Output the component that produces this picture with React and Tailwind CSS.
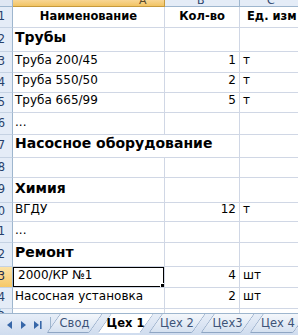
import React from 'react';

const rows = [
  { n: 1, h: 'h-[21px]', kind: 'header' },
  { n: 2, h: 'h-[24px]', a: 'Трубы', bold: true },
  { n: 3, h: 'h-[21px]', a: 'Труба 200/45', b: '1', c: 'т' },
  { n: 4, h: 'h-[20px]', a: 'Труба 550/50', b: '2', c: 'т' },
  { n: 5, h: 'h-[20px]', a: 'Труба 665/99', b: '5', c: 'т' },
  { n: 6, h: 'h-[22px]', a: '...' },
  { n: 7, h: 'h-[23px]', a: 'Насосное оборудование', bold: true, overflow: true },
  { n: 8, h: 'h-[20px]' },
  { n: 9, h: 'h-[25px]', a: 'Химия', bold: true },
  { n: 10, h: 'h-[19px]', a: 'ВГДУ', b: '12', c: 'т' },
  { n: 11, h: 'h-[21px]', a: '...' },
  { n: 12, h: 'h-[24px]', a: 'Ремонт', bold: true },
  { n: 13, h: 'h-[21px]', a: '2000/КР №1', b: '4', c: 'шт', sel: true },
  { n: 14, h: 'h-[21px]', a: 'Насосная установка', b: '2', c: 'шт' },
  { n: 15, h: 'h-[10px]' },
];

function RowHead({ n, sel }) {
  return (
    <div
      className={`w-[13px] shrink-0 overflow-hidden flex justify-end items-center pr-[7px] border-r border-b border-r-[#9eb6ce] border-b-[#c5d2e3] text-[11.5px] leading-none ${
        sel ? 'bg-gradient-to-b from-[#fbe3a8] to-[#f6c866] text-[#1c2b4a]' : 'bg-[#e4ecf7] text-[#27416b]'
      }`}
    >
      <span className="whitespace-nowrap">{n}</span>
    </div>
  );
}

function Row({ r }) {
  if (r.kind === 'header') {
    return (
      <div className={`flex ${r.h}`}>
        <RowHead n={r.n} />
        <div className="w-[152px] shrink-0 border-r border-b border-[#d0d7e5] flex items-center justify-center font-bold text-[11.5px] text-black">
          Наименование
        </div>
        <div className="w-[75px] shrink-0 border-r border-b border-[#d0d7e5] flex items-center justify-center font-bold text-[11.5px] text-black">
          Кол-во
        </div>
        <div className="w-[58px] shrink-0 border-b border-[#d0d7e5] flex items-center pl-[7px] font-bold text-[11.5px] text-black whitespace-nowrap">
          Ед. изм
        </div>
      </div>
    );
  }
  return (
    <div className={`flex ${r.h}`}>
      <RowHead n={r.n} sel={r.sel} />
      <div
        className={`relative w-[152px] shrink-0 border-b border-[#d0d7e5] flex items-end pb-[3px] whitespace-nowrap ${
          r.overflow ? 'z-10' : 'border-r overflow-hidden'
        } ${r.bold ? 'text-[14px] font-bold pl-[2px] pb-[2px]' : 'text-[12px] pl-[2px]'} ${r.sel ? 'pl-[5px]' : ''}`}
      >
        {r.a}
        {r.sel && (
          <>
            <div className="absolute -left-px -top-px -right-px -bottom-px border-2 border-black pointer-events-none" />
            <div className="absolute -right-[3px] -bottom-[3px] w-[5px] h-[5px] bg-black border border-white box-content" />
          </>
        )}
      </div>
      <div className="w-[75px] shrink-0 border-r border-b border-[#d0d7e5] flex items-end justify-end pr-[3px] pb-[3px] text-[12px]">
        {r.b}
      </div>
      <div className="w-[58px] shrink-0 border-b border-[#d0d7e5] flex items-end pl-[3px] pb-[3px] text-[12px]">
        {r.c}
      </div>
    </div>
  );
}

function Tab({ label, active, w }) {
  return (
    <div className={`relative h-[19px] flex items-center justify-center ${w}`}>
      <div
        className={`absolute inset-y-0 left-[4px] right-[4px] -skew-x-[35deg] border-l border-r border-b border-[#8fa6c4] rounded-b-[2px] ${
          active ? 'bg-white border-b-white' : 'bg-gradient-to-b from-[#f4f7fb] to-[#d5e1f0]'
        }`}
      />
      <span
        className={`relative text-[11.5px] whitespace-nowrap ${active ? 'font-bold text-black' : 'text-[#3d5378]'}`}
      >
        {label}
      </span>
    </div>
  );
}

export default function App() {
  return (
    <div
      className="w-[298px] h-[335px] overflow-hidden bg-white flex flex-col text-black"
      style={{ fontFamily: '"DejaVu Sans", Verdana, sans-serif' }}
    >
      {/* column header */}
      <div className="flex h-[7px] shrink-0 overflow-hidden">
        <div className="w-[13px] shrink-0 bg-[#dfe7f3] border-r border-b border-[#9eb6ce]" />
        <div className="w-[152px] shrink-0 bg-gradient-to-b from-[#f8d694] to-[#f2c462] border-r border-b border-[#c69a3c] relative overflow-hidden">
          <span className="absolute left-[126px] -top-[7px] text-[11px] text-[#5a4a2a]">A</span>
        </div>
        <div className="w-[75px] shrink-0 bg-[#e4ecf7] border-r border-b border-[#9eb6ce] relative overflow-hidden">
          <span className="absolute left-[32px] -top-[7px] text-[11px] text-[#27416b]">B</span>
        </div>
        <div className="w-[58px] shrink-0 bg-[#e4ecf7] border-b border-[#9eb6ce] relative overflow-hidden">
          <span className="absolute left-[27px] -top-[7px] text-[11px] text-[#27416b]">C</span>
        </div>
      </div>

      {rows.map((r) => (
        <Row key={r.n} r={r} />
      ))}

      {/* sheet tabs bar */}
      <div className="relative flex-1 flex items-start bg-gradient-to-b from-[#e7eef8] to-[#cfdcee] border-t border-[#9eb6ce] -mt-[6px] z-20">
        <div className="w-[50px] h-full flex items-center gap-[7px] pl-[7px] shrink-0">
          <svg width="6" height="8" viewBox="0 0 6 8">
            <path d="M5 0 L0 4 L5 8 Z" fill="#3767a8" />
          </svg>
          <svg width="6" height="8" viewBox="0 0 6 8">
            <path d="M1 0 L6 4 L1 8 Z" fill="#3767a8" />
          </svg>
          <svg width="9" height="8" viewBox="0 0 9 8">
            <path d="M1 0 L6 4 L1 8 Z" fill="#3767a8" />
            <rect x="7" y="0" width="1.6" height="8" fill="#3767a8" />
          </svg>
        </div>
        <div className="w-px h-[14px] bg-[#9eb6ce] mt-[3px] shrink-0" />
        <div className="flex items-start -ml-[2px]">
          <Tab label="Свод" w="w-[51px]" />
          <Tab label="Цех 1" active w="w-[51px] z-10" />
          <Tab label="Цех 2" w="w-[52px]" />
          <Tab label="Цех3" w="w-[49px]" />
          <Tab label="Цех 4" w="w-[52px]" />
        </div>
      </div>
    </div>
  );
}
